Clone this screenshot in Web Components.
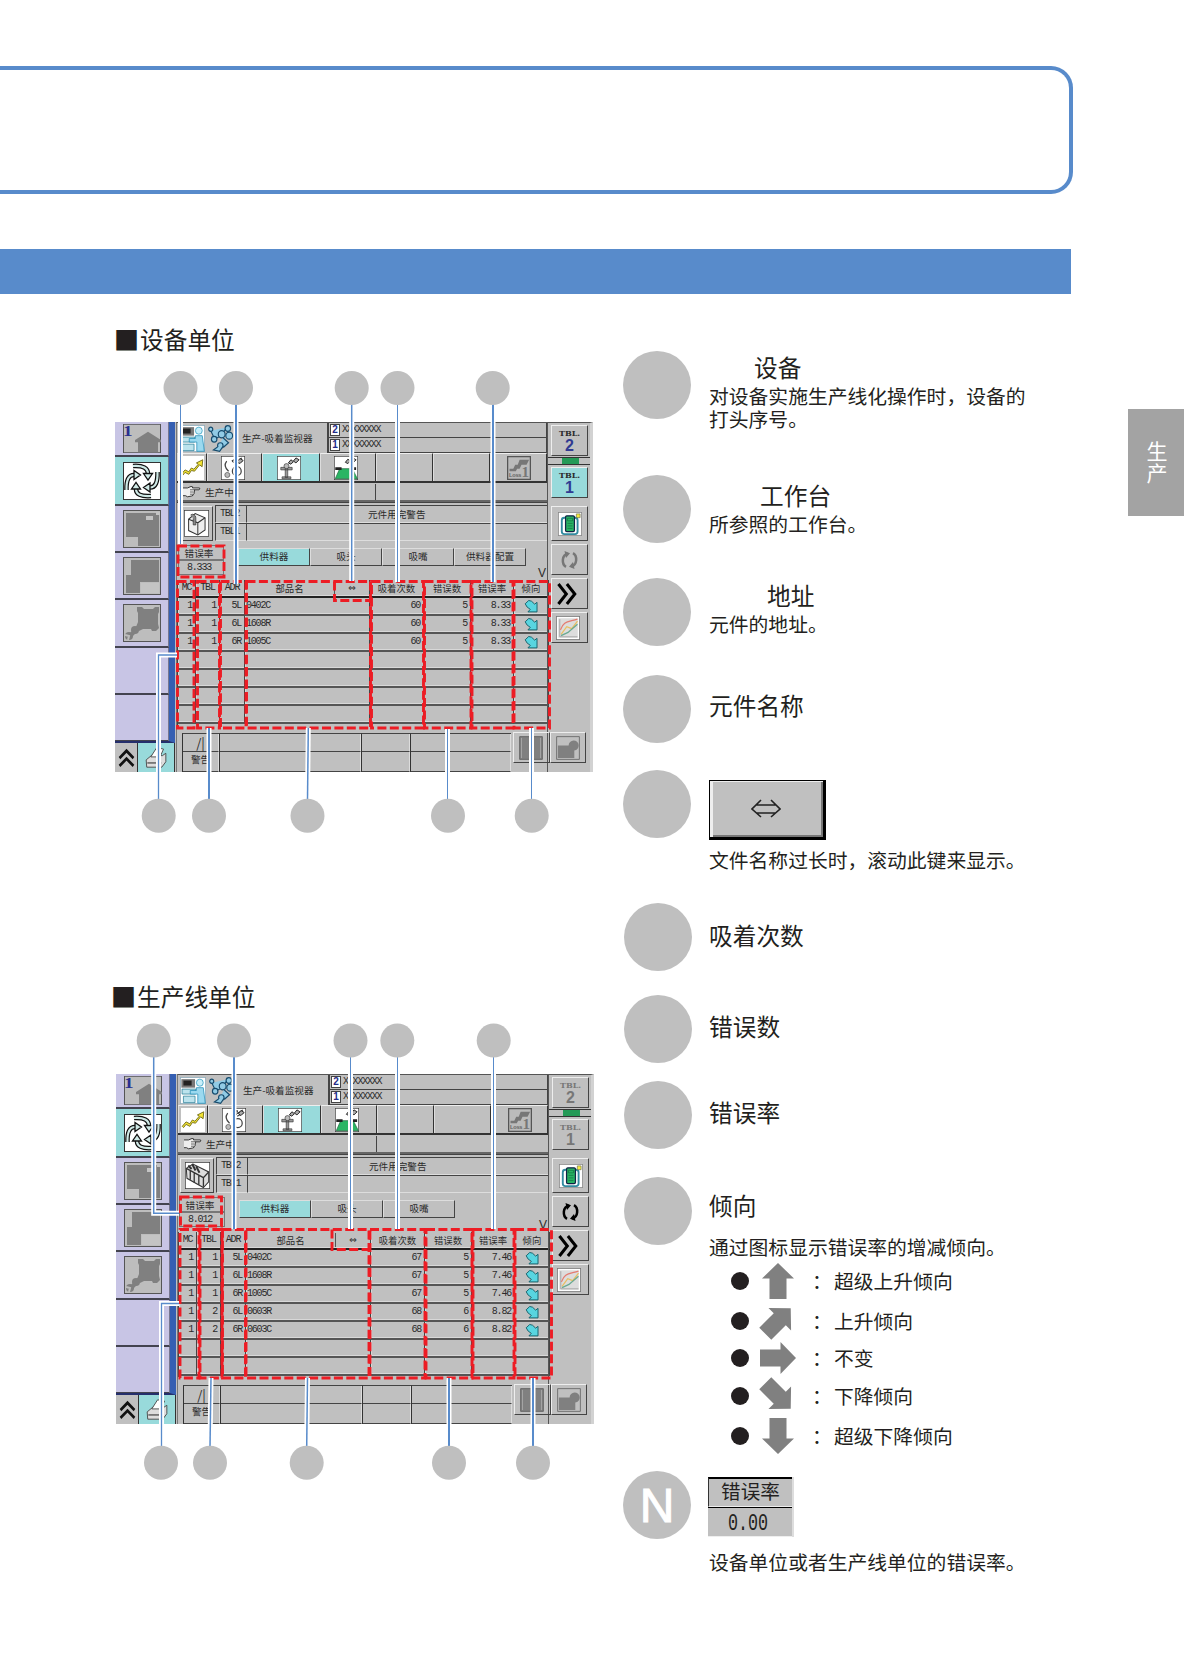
<!DOCTYPE html>
<html lang="zh-CN">
<head>
<meta charset="utf-8">
<title>生产-吸着监视器</title>
<style>
  body {
    margin: 0;
    background: #fff;
    color: #231f20;
    font-family: "Noto Sans CJK SC", sans-serif;
  }
</style>
</head>
<body>
<manual-page></manual-page>
<script>
  const define = (name, html, setup) => {
    const template = document.createElement('template');
    template.innerHTML = html;
    customElements.define(name, class extends HTMLElement {
      constructor() {
        super();
        this.attachShadow({ mode: 'open' });
      }
      connectedCallback() {
        if (this.shadowRoot.firstChild) return;
        this.shadowRoot.appendChild(template.content.cloneNode(true));
        if (setup) setup(this, this.shadowRoot);
      }
    });
  };

  const frame = '<rect x=".5" y=".5" width="37" height="37" fill="#bdbdbd" stroke="#555"/>';
  const white = '<rect x=".5" y=".5" width="37" height="37" fill="#fff" stroke="#333"/>';
  const arcs = 'M10 4Q25 3 25 12M34.500 10Q35 25.500 27 25.500M28 34Q13 35 13 27M3.500 28Q3 13 11 13';
  // every icon sits on a 38 unit canvas
  const icons = {
    home: frame + '<path d="M12 21 25 10l13 11v3h-3v13H15V24h-3z" fill="#808080"/><text x="0" y="16" font-family="Liberation Serif" font-weight="bold" font-size="19" fill="#2a2f8f">1</text>',
    cycle: white + `<path d="${arcs}" fill="none" stroke="#111" stroke-width="4.600"/><path d="${arcs}" fill="none" stroke="#cfe9e6" stroke-width="2.200"/><path d="M20.500 11.500h9L25 18zM27 21v9l-6.500-4.500zM8.500 27h9L13 20.500zM11 8.500v9l6.500-4.500z" fill="#cfe9e6" stroke="#111" stroke-width="1.300"/>`,
    board: frame + '<path d="M3 3h33v33H15v-9H3z" fill="#808080"/><path d="M23 6h7v4h-7zM33 2h4v3h-4z" fill="#c4c4c4"/>',
    blocks: frame + '<path d="M8 3h28v22H17v11H3V18h5z" fill="#808080"/><path d="M18 26h18v10H18z" fill="#c4c4c4"/>',
    service: frame + '<path d="M14 3h5l2 2h9l2-2h4v5l-1 2v10l1 4-3 3h-4l-1-2h-8l-4 2-3-4 2-5V9l-1-2z" fill="#808080"/><path d="m19 20-11 11" stroke="#808080" stroke-width="4"/><circle cx="12" cy="26" r="4" fill="#808080"/><circle cx="6" cy="32" r="4" fill="#808080"/><path d="m2 31 4 1-1 4" fill="none" stroke="#bdbdbd" stroke-width="2"/>',
    scroll: '<path d="M5 20 19 8l14 12M5 33 19 21l14 12" fill="none" stroke="#111" stroke-width="5"/>',
    printer: '<path d="M2 23 12 15l18 1 6-4v14l-7 9H3z" fill="#ddd" stroke="#444" stroke-width="1.5"/><path d="M10 18 20 3l12 2-6 13z" fill="#fff" stroke="#444" stroke-width="1.5"/><path d="M4 28h24" stroke="#444" stroke-width="2"/>',
    operator: '<path fill="#fff" stroke="#6c94a8" d="M.5.5h37v37H.5z"/><path d="M2 3h20v12H2z" fill="#777"/><path d="M5 5h12v7H5z" fill="#222"/><path d="M3 17h20v7H3zM5 27h17v9H5z" fill="#bce3ed" stroke="#1e7892"/><circle cx="29" cy="8" r="5" fill="#c9effa" stroke="#2094bd"/><path d="M24 15h10l3 22H26V24H15v-5h9z" fill="#9bd9ef" stroke="#1786b2"/>',
    robot: '<g fill="#91cbe5" stroke="#174c6e" stroke-width="1.7"><path d="m4 8 6 12 9-5 9-12"/><circle cx="4" cy="6" r="3"/><circle cx="9" cy="20" r="4"/><circle cx="20" cy="13" r="5"/><circle cx="29" cy="5" r="4"/><circle cx="31" cy="15" r="5"/><path d="m22 18 8 7-7 6-7-2"/><circle cx="18" cy="29" r="4"/><path d="m14 31-6 4 9 2 5-7"/></g>',
    trend: '<path d="M0 0h38v38H0z" fill="#fff"/><path d="m2 29 6-7 6 3 4-6 4 2 7-8-3-2 10-5-1 11-4-3-8 10-5-1-4 6-6-3-4 5z" fill="#f4e533" stroke="#77701a" stroke-width="1.5"/>',
    head: white + '<path d="M9 8q-6 8 3 16M17 8l8-4M24 13l10-5M26 8l7-5" stroke="#444" stroke-width="2" fill="none"/><circle cx="25" cy="24" r="7" fill="none" stroke="#444" stroke-width="2"/><circle cx="10" cy="30" r="4" fill="#bbb" stroke="#444"/><path d="m18 9 4-5 4 3-4 4zm8 0 4-5 5 3-5 5z" fill="#aaa" stroke="#222" stroke-width="1.5"/>',
    nozzle: white + '<path d="M6 18h18v4H6zM13 20h4v14h-4zM8 33h14v3H8z" fill="#999" stroke="#333"/><path d="m18 11 4-5 4 3-4 4zm8-3 4-5 5 3-5 5z" fill="#aaa" stroke="#222" stroke-width="1.5"/><circle cx="15" cy="16" r="4" fill="#bbb" stroke="#333"/>',
    conveyor: white + '<path d="M9 20h20l8 16H2z" fill="#2bb564" stroke="#135b32"/><path d="M2 20h10M25 20h10" stroke="#222" stroke-width="4"/><path d="m18 10 4-5 4 3-4 4zm8-2 4-5 5 3-5 5z" fill="#aaa" stroke="#222" stroke-width="1.5"/>',
    loss: '<rect x="1" y="1" width="36" height="36" fill="#bbb" stroke="#555" stroke-width="2"/><path d="M4 20h6l3-6h4l3-8h15l-4 8h-8l-3 6h-4l-2 4H4z" fill="#777"/><text x="3" y="33" font-size="9" font-weight="bold" font-family="Liberation Sans" fill="#666" textLength="20">Loss</text><text x="23" y="34" font-size="24" font-weight="bold" font-family="Liberation Serif" fill="#777">1</text>',
    hand: '<path d="M2 8h9l7-4q5 0 3 4h14q2 3-1 5H24q3 3 0 6 2 3-1 6 0 4-4 5l-8 2-4-3H2" fill="#eee" stroke="#222" stroke-width="2"/><path d="M24 13h-8M23 19h-7M22 25h-6" stroke="#222" stroke-width="1.500"/>',
    mc: white + '<path d="m7 13 10-8 15 6v17l-11 7L7 29z" fill="#eee" stroke="#333" stroke-width="1.5"/><path d="m7 13 14 5 11-7M21 18v17" fill="none" stroke="#333" stroke-width="1.5"/><path d="M10 7a5 5 0 0 1 8 4v10h-4V12" fill="#888" stroke="#333"/>',
    mcs: white + '<path d="m2 9 10-6 24 11v14l-8 8L3 23z" fill="#ddd" stroke="#333" stroke-width="1.5"/><path d="M2 9l26 13 8-8M28 22v13M8 12v13M14 15v14M21 18v14" fill="none" stroke="#333" stroke-width="2"/><path d="m5 5 5 5m1-7 5 9m1-6 5 9" stroke="#333" stroke-width="3"/>',
    panel: '<path fill="#fff" stroke="#555" d="M.5.5h37v37H.5z"/><rect x="6" y="9" width="25" height="26" rx="4" fill="none" stroke="#328ba0" stroke-width="3"/><rect x="12" y="6" width="14" height="25" rx="2" fill="#27b364" stroke="#124" stroke-width="2"/><path d="M15 10h8v4h-8zM15 18h8M15 22h8M15 26h8" stroke="#126b3b" fill="none"/><path d="M29 3h6v6h-6z" fill="#f6ec3f" stroke="#664"/>',
    rotate: '<path d="M16 7C3 9 3 27 12 32M22 31c13-2 13-20 4-25" fill="none" stroke="currentColor" stroke-width="5"/><path d="m9 2 11 4-8 9zM29 36l-11-4 8-9z" fill="currentColor"/>',
    forward: '<path d="m4 3 13 16L4 35M18 3l13 16-13 16" fill="none" stroke="#000" stroke-width="5"/>',
    graph: '<path fill="#ddd" stroke="#fff" stroke-width="3" d="M2 2h34v34H2z"/><path d="M.5.5h37v37H.5z" fill="none" stroke="#333"/><path d="M6 33V5M6 33h28" stroke="#888"/><path d="M7 22C12 8 18 10 34 5" stroke="#e47b70" fill="none" stroke-width="2"/><path d="m8 29 9-12 8 3 9-12" stroke="#e8bf62" fill="none" stroke-width="2"/><path d="m8 31 11-5 15-13" stroke="#69a992" fill="none" stroke-width="2"/>',
    square: '<path fill="#808080" stroke="#444" d="M1 1h36v36H1z"/><path d="M4 3v32M34 3v32" stroke="#bbb"/>',
    corner: '<path fill="#c0c0c0" stroke="#444" d="M1 1h36v36H1z"/><path d="M3 15h17a8 8 0 1 1 9 8v12H3z" fill="#808080"/>',
    down: '<path d="M3 13 12 4l7 2 8 8 6-5v26H10l6-7-8-6z" fill="#58d5e0" stroke="#17616a" stroke-width="2.5"/>'
  };

  define('screen-icon', `
    <style>
      :host { display: block; width: 26px; height: 26px; flex: none; }
      svg { display: block; width: 100%; height: 100%; }
    </style>
    <svg viewBox="0 0 38 38" preserveAspectRatio="none"></svg>
  `, (el, root) => {
    root.querySelector('svg').innerHTML = icons[el.getAttribute('name')];
  });

  define('screen-sidebar', `
    <style>
      :host { display: block; width: 60px; height: 350px; }
      .items {
        display: grid;
        grid-template-rows: 35px 49px 47px 47px 48px 47px 47px;
        box-sizing: border-box;
        height: 321px;
        border-right: 6px solid #355fb2;
        border-bottom: 2px solid #252f6c;
        overflow: hidden;
      }
      .item {
        display: grid;
        align-content: center;
        padding-left: 8px;
        background: #c8c5e5;
        border-bottom: 2px solid #43434f;
        border-right: 1px solid #77778f;
      }
      .item.on { background: #98dadb; }
      screen-icon { width: 38px; height: 38px; }
      .item:first-child screen-icon { height: 29px; }
      .foot { display: flex; height: 29px; }
      .foot div { display: grid; place-items: center; background: #c0c0c0; width: 22px; border-right: 1px solid #333; }
      .foot div + div { background: #98dadb; width: 36px; }
      .foot screen-icon { width: 19px; height: 23px; }
      .foot div + div screen-icon { width: 22px; }
    </style>
    <div class="items">
      <div class="item"><screen-icon name="home"></screen-icon></div>
      <div class="item on"><screen-icon name="cycle"></screen-icon></div>
      <div class="item"><screen-icon name="board"></screen-icon></div>
      <div class="item"><screen-icon name="blocks"></screen-icon></div>
      <div class="item"><screen-icon name="service"></screen-icon></div>
      <div class="item"></div>
      <div class="item"></div>
    </div>
    <div class="foot">
      <div><screen-icon name="scroll"></screen-icon></div>
      <div><screen-icon name="printer"></screen-icon></div>
    </div>
  `);

  const tables = {
    device: [
      ['1', '1', '5L', '0402C', '60', '5', '8.33'],
      ['1', '1', '6L', '1608R', '60', '5', '8.33'],
      ['1', '1', '6R', '1005C', '60', '5', '8.33']
    ],
    line: [
      ['1', '1', '5L', '0402C', '67', '5', '7.46'],
      ['1', '1', '6L', '1608R', '67', '5', '7.46'],
      ['1', '1', '6R', '1005C', '67', '5', '7.46'],
      ['1', '2', '6L', '0603R', '68', '6', '8.82'],
      ['1', '2', '6R', '0603C', '68', '6', '8.82']
    ]
  };

  define('pickup-table', `
    <style>
      :host {
        display: grid;
        grid-template-columns: 18px 24px 25px 125px 54px 47px 43px 35px;
        grid-template-rows: 18px repeat(7, 18px);
        height: 145px;
        border-left: 1px solid #444;
      }
      div {
        display: flex;
        align-items: center;
        justify-content: flex-end;
        box-sizing: border-box;
        padding: 0 3px 0 1px;
        border-right: 1px solid #444;
        border-bottom: 2px solid #555;
        box-shadow: inset 1px -1px #d8d8d8;
        font: 10px/16px "Liberation Mono", monospace;
        letter-spacing: -1.2px;
        white-space: nowrap;
        overflow: hidden;
      }
      .name { justify-content: flex-start; }
      .head { justify-content: center; padding: 0; border-bottom-color: #222; }
      .cjk { font-family: "Noto Sans CJK SC", sans-serif; font-size: 9.4px; letter-spacing: 0; }
      .head span { flex: 1; text-align: center; }
      .head b {
        width: 34px;
        font: 9px/14px "DejaVu Sans", sans-serif;
        text-align: center;
        border-left: 1px solid #555;
      }
      screen-icon { width: 15px; height: 14px; margin-right: 6px; }
    </style>
  `, (el, root) => {
    const add = (cls, html) => {
      const cell = document.createElement('div');
      cell.className = cls;
      cell.innerHTML = html;
      root.appendChild(cell);
    };
    ['MC', 'TBL', 'ADR'].forEach(t => add('head', t));
    add('head cjk', '<span>部品名</span><b>⇔</b>');
    ['吸着次数', '错误数', '错误率', '倾向'].forEach(t => add('head cjk', t));
    const rows = tables[el.getAttribute('unit')];
    for (let r = 0; r < 7; r++) {
      for (let c = 0; c < 7; c++) add(c === 3 ? 'name' : '', rows[r] ? rows[r][c] : '');
      add('', rows[r] ? '<screen-icon name="down"></screen-icon>' : '');
    }
  });

  define('machine-screen', `
    <style>
      :host {
        display: grid;
        grid-template-columns: 61px 371px 46px;
        width: 478px;
        height: 350px;
        overflow: hidden;
        background: #c0c0c0;
        color: #2b2b2b;
        font-size: 9.6px;
        line-height: 14px;
        white-space: nowrap;
      }
      .mono { font-family: "Liberation Mono", monospace; font-size: 10px; letter-spacing: -1.2px; }
      .main { display: flex; flex-direction: column; box-sizing: border-box; height: 350px; border-top: 1px solid #555; border-left: 1px solid #777; }
      .title { display: grid; grid-template-columns: 29px 29px 92px 1fr; height: 30px; align-items: center; }
      .title > screen-icon { width: 26px; height: 27px; margin-left: 2px; }
      .name { padding-left: 7px; }
      .files { border-left: 2px solid #444; border-right: 1px solid #444; height: 30px; }
      .file { display: flex; gap: 2px; height: 14px; border-bottom: 1px solid #444; padding-left: 1px; align-items: center; }
      .file i {
        box-sizing: border-box;
        width: 10px;
        height: 12px;
        border: 1px solid #444;
        background: #fff;
        color: #232c88;
        font: bold 10px/10px "Liberation Sans", sans-serif;
        text-align: center;
      }
      .modes { display: grid; grid-template-columns: 30px 55px 58px 56px 57px 57px 1fr; height: 30px; box-sizing: border-box; border-bottom: 2px solid #333; }
      .modes div { display: grid; place-items: center; border-top: 1px solid #eee; border-right: 1px solid #333; border-left: 1px solid #ddd; }
      .modes .on { background: #98dadb; }
      .modes screen-icon { width: 24px; height: 24px; }
      .modes div:nth-child(2) screen-icon, .modes .on screen-icon, .modes div:nth-child(4) screen-icon { margin-right: 4px; }
      .status { display: flex; align-items: center; height: 17px; padding-left: 5px; }
      .status screen-icon { width: 19px; height: 14px; margin-right: 4px; }
      .status span { width: 170px; }
      .status i { flex: 1; height: 16px; border-left: 1px solid #444; }
      .rule { height: 3px; margin-bottom: 2px; border-top: 2px solid #666; border-bottom: 1px solid #444; box-sizing: border-box; }
      .info { display: grid; grid-template-columns: 38px 31px 1fr; height: 37px; }
      .unit { display: grid; place-items: center; margin: 1px 2px; }
      .unit screen-icon { width: 25px; height: 27px; }
      .bevel { border: 1px solid; border-color: #eee #444 #444 #eee; box-sizing: border-box; }
      .info .cell { height: 18px; box-sizing: border-box; border-top: 1px solid #444; border-left: 1px solid #444; border-bottom: 1px solid #ddd; padding: 1px 4px; }
      .info .message { padding-left: 121px; }
      .tabs { display: flex; height: 38px; align-items: flex-start; box-sizing: border-box; padding: 3px 0 0 1px; }
      .rate { width: 46px; margin-right: 14px; text-align: center; }
      .rate div { height: 15px; box-sizing: border-box; border: 1px solid #777; padding-right: 4px; }
      .tab { width: 72px; height: 18px; margin-top: 3px; text-align: center; border-color: #ddd #444 #444 #ddd; line-height: 15px; }
      .tab.on { background: #98dadb; }
      .more { margin: 21px 1px 0 auto; font: 12px/14px "Liberation Sans", sans-serif; }
      .bottom { display: grid; grid-template-columns: 37px 142px 49px 101px 1fr; height: 39px; margin: 8px 0 0 5px; }
      .bottom > div { display: grid; grid-template-rows: 18px 20px; border-left: 1px solid #333; border-top: 1px solid #444; }
      .bottom > div:last-child { border: 0; }
      .bottom > div > span { border-bottom: 1px solid #444; border-right: 1px solid #ddd; text-align: center; }
      .bottom .slash { font-size: 13px; line-height: 17px; }
      .side { padding: 2px 0 0 3px; border-top: 1px solid #555; border-left: 1px solid #555; border-right: 3px solid #d2d2d2; box-sizing: border-box; height: 350px; }
      .table {
        box-sizing: border-box;
        width: 37px;
        height: 31px;
        text-align: center;
        font: bold 8px/10px "DejaVu Serif", serif;
        padding-top: 2px;
      }
      .table b { display: block; font: bold 16px/15px "Liberation Sans", sans-serif; color: #303a92; }
      .link { height: 6px; margin: 1px 0 2px -3px; border-top: 1px solid #333; border-bottom: 1px solid #333; }
      .link i { display: block; width: 17px; height: 6px; margin-left: 14px; background: #249a57; }
      .table.on { background: #98dadb; }
      :host([unit=line]) .table { background: #c0c0c0; color: #777; }
      :host([unit=line]) .table b { color: #777; }
      .button { display: grid; place-items: center; width: 37px; height: 31px; margin-bottom: 3px; }
      .button screen-icon { width: 24px; height: 24px; }
      .gap { height: 8px; }
      .button.rot { color: #777; }
      :host([unit=line]) .rot { color: #000; }
      .rot screen-icon { width: 19px; height: 20px; }
      .fwd screen-icon { width: 23px; margin-right: 4px; }
      .graph screen-icon { margin-right: 3px; }
      .foot { display: flex; width: 73px; margin: 89px 0 0 -38px; }
    </style>
    <screen-sidebar></screen-sidebar>
    <div class="main">
      <div class="title">
        <screen-icon name="operator"></screen-icon>
        <screen-icon name="robot"></screen-icon>
        <span class="name">生产-吸着监视器</span>
        <div class="files">
          <div class="file"><i>2</i><span class="mono">XXXXXXXX</span></div>
          <div class="file"><i>1</i><span class="mono">XXXXXXXX</span></div>
        </div>
      </div>
      <div class="modes">
        <div><screen-icon name="trend"></screen-icon></div>
        <div><screen-icon name="head"></screen-icon></div>
        <div class="on"><screen-icon name="nozzle"></screen-icon></div>
        <div><screen-icon name="conveyor"></screen-icon></div>
        <div></div>
        <div></div>
        <div><screen-icon name="loss"></screen-icon></div>
      </div>
      <div class="status"><screen-icon name="hand"></screen-icon><span>生产中</span><i></i></div>
      <div class="rule"></div>
      <div class="info">
        <div class="unit bevel"></div>
        <div><div class="cell mono">TBL2</div><div class="cell mono">TBL1</div></div>
        <div><div class="cell message">元件用完警告</div><div class="cell"></div></div>
      </div>
      <div class="tabs">
        <div class="rate"><div>错误率</div><div class="mono" id="rate"></div></div>
      </div>
      <div class="bottom">
        <div><span class="slash">/|</span><span>警告</span></div>
        <div><span></span><span></span></div>
        <div><span></span><span></span></div>
        <div><span></span><span></span></div>
        <div></div>
      </div>
    </div>
    <div class="side">
      <div class="table bevel">TBL.<b>2</b></div>
      <div class="link"><i></i></div>
      <div class="table bevel on">TBL.<b>1</b></div>
      <div class="gap"></div>
      <div class="button bevel" style="height: 35px"><screen-icon name="panel"></screen-icon></div>
      <div class="button bevel rot"><screen-icon name="rotate"></screen-icon></div>
      <div class="button bevel fwd"><screen-icon name="forward"></screen-icon></div>
      <div class="button bevel graph"><screen-icon name="graph"></screen-icon></div>
      <div class="foot">
        <div class="button bevel"><screen-icon name="square"></screen-icon></div>
        <div class="button bevel"><screen-icon name="corner"></screen-icon></div>
      </div>
    </div>
  `, (el, root) => {
    const unit = el.getAttribute('unit');
    const tabs = root.querySelector('.tabs');
    tabs.insertAdjacentHTML('afterend', `<pickup-table unit="${unit}"></pickup-table>`);
    root.querySelector('.unit').innerHTML = `<screen-icon name="${unit === 'line' ? 'mcs' : 'mc'}"></screen-icon>`;
    root.querySelector('#rate').textContent = el.getAttribute('rate');
    el.getAttribute('tabs').split(',').forEach((label, i) => {
      tabs.insertAdjacentHTML('beforeend', `<div class="tab bevel${i ? '' : ' on'}">${label}</div>`);
    });
    tabs.insertAdjacentHTML('beforeend', '<span class="more">V</span>');
  });

  // dots: circle centres, lines: [path, stroke width], boxes: dashed outlines
  const callouts = {
    device: {
      origin: 294,
      dots: [[180.5, 388], [236, 388], [351.7, 388], [397.5, 388], [492.7, 388], [158.7, 815.7], [209, 815.7], [307.5, 815.7], [448, 815.7], [531.7, 815.7]],
      lines: [['M180.5 404V544', 1], ['M236 404V584', 2], ['M351.7 404V581', 1.5], ['M397.5 404V582', 1], ['M493 404V582', 2], ['M158.5 800V655H177', 1.3], ['M209 800V728', 2], ['M307.5 800 308.3 728', 1.5], ['M447.5 800V729', 1], ['M531.5 800V728', 1]],
      clip: [422, 772],
      boxes: ['M178 546H224V577H178Z', 'M177.5 581.5H194V728H177.5Z', 'M197.5 581.5H219.5V728H197.5Z', 'M220.5 581.5H246V728H220.5Z', 'M246.5 581.5H370.5V728H246.5Z', 'M334.5 581.5V600.5H370', 'M371.5 581.5H423.5V728H371.5Z', 'M424.5 581.5H471V728H424.5Z', 'M472 581.5H513V728H472Z', 'M514 581.5H549.5V728H514Z']
    },
    line: {
      origin: 946,
      dots: [[153.7, 1040.5], [234, 1040.5], [350.5, 1040.5], [397.3, 1040.5], [493.7, 1040.5], [161, 1462.7], [210, 1462.7], [306.7, 1462.7], [449, 1462.7], [533, 1462.7]],
      lines: [['M153.7 1057V1213.3H179', 1.5], ['M234 1057V1229', 2], ['M350.5 1057V1229', 1], ['M397.5 1057V1229', 1], ['M493.5 1057V1229', 1], ['M161.5 1447V1303.5H179', 1.3], ['M210 1447 211 1378', 1.5], ['M306.7 1447 307.5 1378', 1.5], ['M449 1447V1378', 2], ['M533 1447V1378', 2]],
      clip: [1074, 1424],
      boxes: ['M180.5 1197H221.5V1226H180.5Z', 'M180 1229.5H199V1378H180Z', 'M200 1229.5H222V1378H200Z', 'M222.5 1229.5H245.5V1378H222.5Z', 'M246 1229.5H369V1378H246Z', 'M332 1229.5V1249.5H369', 'M370 1229.5H425V1378H370Z', 'M426 1229.5H472V1378H426Z', 'M473 1229.5H514V1378H473Z', 'M515 1229.5H551.5V1378H515Z']
    }
  };

  define('callout-layer', `
    <style>
      :host { display: block; position: absolute; inset: 0; }
      svg { display: block; width: 623px; height: 652px; }
      path { fill: none; }
      .halo { stroke: #fff; stroke-width: 5; }
      .wire { stroke: #588bcb; }
      .box { stroke: #ed1c24; stroke-width: 2.9; stroke-dasharray: 9 3.4; }
      circle { fill: #bfbfbf; }
    </style>
    <svg></svg>
  `, (el, root) => {
    const c = callouts[el.getAttribute('unit')];
    const svg = root.querySelector('svg');
    svg.setAttribute('viewBox', `0 ${c.origin} 623 652`);
    svg.innerHTML = `
      <clipPath id="screen"><rect x="100" y="${c.clip[0]}" width="500" height="${c.clip[1] - c.clip[0]}"/></clipPath>
      <g>${c.boxes.map(d => `<path class="box" d="${d}"/>`).join('')}</g>
      <g clip-path="url(#screen)">${c.lines.map(l => `<path class="halo" d="${l[0]}"/>`).join('')}</g>
      ${c.lines.map(l => `<path class="wire" d="${l[0]}" stroke-width="${l[1]}"/>`).join('')}
      ${c.dots.map(p => `<circle cx="${p[0]}" cy="${p[1]}" r="17"/>`).join('')}`;
  });

  define('screen-figure', `
    <style>
      :host { display: block; position: relative; height: 652px; box-sizing: border-box; padding-left: var(--inset); }
      h2 {
        display: flex;
        gap: 3px;
        box-sizing: border-box;
        height: 128px;
        margin: 0 0 0 var(--shift, 1px);
        padding: var(--top) 0 0;
        font-size: 23.7px;
        font-weight: 400;
        line-height: 30px;
      }
      i { font-style: normal; width: 21px; height: 30px; display: flex; justify-content: center; font-size: 25.5px; }
    </style>
    <h2><i>■</i><slot></slot></h2>
    <slot name="screen"></slot>
  `, (el, root) => {
    root.querySelector('slot[name]').insertAdjacentHTML('afterend', `<callout-layer unit="${el.getAttribute('unit')}"></callout-layer>`);
  });

  define('legend-item', `
    <style>
      :host { display: flex; gap: 18px; box-sizing: border-box; height: var(--h); padding-left: var(--x, 0px); }
      .dot {
        display: grid;
        place-items: center;
        flex: none;
        width: 68px;
        height: 68px;
        border-radius: 50%;
        background: #bfbfbf;
        color: #fff;
        font: 48px/70px "Liberation Sans", sans-serif;
        -webkit-text-stroke: 1px #fff;
      }
      .text { padding-top: var(--top, 0px); margin-left: calc(0px - var(--x, 0px)); font-size: 19.8px; line-height: 23px; white-space: nowrap; }
    </style>
    <div class="dot"></div>
    <div class="text"><slot></slot></div>
  `, (el, root) => {
    root.querySelector('.dot').textContent = el.getAttribute('mark') || '';
  });

  define('legend-title', `
    <style>
      :host { display: block; font-size: 23.7px; line-height: 24px; padding-left: var(--indent, 0px); margin-bottom: var(--gap, 3px); }
    </style>
    <slot></slot>
  `);

  define('scroll-key', `
    <style>
      :host {
        display: grid;
        place-items: center;
        box-sizing: border-box;
        width: 117px;
        height: 60px;
        border: solid #000;
        border-width: 1px 3px 3px 1px;
        background: #c0c0c0;
        box-shadow: inset 3px 1px #eee, inset -2px -2px #777;
      }
      svg { width: 30px; height: 19px; margin: -2px 2px 0 0; }
    </style>
    <svg viewBox="0 0 30 19"><path d="M5 6h20M5 14h20M10 1 1 10l9 8M20 1l9 9-9 8" fill="none" stroke="#222" stroke-width="1.6"/></svg>
  `);

  define('rate-box', `
    <style>
      :host { display: block; width: 86px; height: 60px; box-sizing: border-box; background: #c0c0c0; border-right: 2px solid #ddd; text-align: center; }
      div { box-sizing: border-box; height: 30px; border-top: 2px solid #000; border-left: 1px solid #333; border-bottom: 1px solid #eee; line-height: 24px; font-size: 19.6px; }
      div + div { border-left: 0; border-top-width: 1px; padding-right: 4px; }
      span { display: inline-block; font: 16.7px/26px "Liberation Mono", monospace; transform: scaleY(1.4); }
    </style>
    <div>错误率</div>
    <div><span>0.00</span></div>
  `);

  define('trend-row', `
    <style>
      :host { display: grid; grid-template-columns: 18px 63px 14px 1fr; align-items: center; height: var(--h, 36px); padding-left: 22px; }
      i { width: 18px; height: 18px; border-radius: 50%; background: #231f20; }
      svg { width: 36px; height: 36px; margin-left: 11px; transform: rotate(var(--turn, 0deg)); overflow: visible; }
      b { font-weight: 400; width: 20px; }
      .label { padding-left: 8px; }
    </style>
    <i></i>
    <svg viewBox="0 0 36 36"><path d="M18 0 34 15.500H26.500V36H9.500V15.500H2Z" fill="#808080"/></svg>
    <b>：</b>
    <span class="label"><slot></slot></span>
  `);

  define('side-tab', `
    <style>
      :host {
        display: grid;
        place-content: center;
        width: 56px;
        height: 107px;
        margin-top: 115px;
        background: #a3a3a3;
        color: #fff;
      }
      span { width: 21px; font-size: 21px; line-height: 21.5px; margin: -2px 0 0 2px; }
    </style>
    <span><slot></slot></span>
  `);

  define('manual-page', `
    <style>
      :host { display: block; width: 1184px; height: 1675px; overflow: hidden; }
      .outline {
        box-sizing: border-box;
        width: 1073px;
        height: 128px;
        margin: 66px 0 55px;
        border: 4px solid #588bcb;
        border-left: 0;
        border-radius: 0 22px 22px 0;
      }
      .band { width: 1071px; height: 45px; background: #588bcb; }
      .body { display: grid; grid-template-columns: 623px 505px 56px; }
      .legend { padding-top: 57px; }
    </style>
    <div style="display: flow-root"><div class="outline"></div></div>
    <div class="band"></div>
    <div class="body">
      <div>
        <screen-figure unit="device" style="--inset: 115px; --top: 30px">设备单位
          <machine-screen slot="screen" unit="device" rate="8.333" tabs="供料器,吸头,吸嘴,供料器配置"></machine-screen>
        </screen-figure>
        <screen-figure unit="line" style="--inset: 116px; --top: 35px; --shift: -3px">生产线单位
          <machine-screen slot="screen" unit="line" rate="8.012" tabs="供料器,吸头,吸嘴"></machine-screen>
        </screen-figure>
      </div>
      <div class="legend">
        <legend-item style="--h: 124px; --top: 4px"><legend-title style="--indent: 45px; --gap: 5px">设备</legend-title>对设备实施生产线化操作时，设备的<br>打头序号。</legend-item>
        <legend-item style="--h: 103px; --top: 8px"><legend-title style="--indent: 51px; --gap: 5px">工作台</legend-title>所参照的工作台。</legend-item>
        <legend-item style="--h: 96.500px; --top: 5px"><legend-title style="--indent: 58px; --gap: 5px">地址</legend-title>元件的地址。</legend-item>
        <legend-item style="--h: 95.500px; --top: 18px"><legend-title>元件名称</legend-title></legend-item>
        <legend-item style="--h: 133px; --top: 10px"><scroll-key style="margin-bottom: 8px"></scroll-key>文件名称过长时，滚动此键来显示。</legend-item>
        <legend-item style="--h: 92px; --top: 20px; --x: 1px"><legend-title>吸着次数</legend-title></legend-item>
        <legend-item style="--h: 86px; --top: 19px; --x: 1px"><legend-title>错误数</legend-title></legend-item>
        <legend-item style="--h: 95.500px; --top: 19px; --x: 1px"><legend-title>错误率</legend-title></legend-item>
        <legend-item style="--h: 294.500px; --top: 16px; --x: 1px"><legend-title style="--gap: 18px">倾向</legend-title>通过图标显示错误率的增减倾向。
          <trend-row style="--h: 42px; margin-top: 2px">超级上升倾向</trend-row>
          <trend-row style="--h: 38px; --turn: 45deg">上升倾向</trend-row>
          <trend-row style="--h: 35px; --turn: 90deg">不变</trend-row>
          <trend-row style="--h: 42px; --turn: 135deg">下降倾向</trend-row>
          <trend-row style="--h: 38px; --turn: 180deg">超级下降倾向</trend-row>
        </legend-item>
        <legend-item mark="N" style="--h: 120px; --top: 6px"><rate-box style="margin: 0 0 13px -1px"></rate-box>设备单位或者生产线单位的错误率。</legend-item>
      </div>
      <side-tab>生产</side-tab>
    </div>
  `);
</script>
</body>
</html>
